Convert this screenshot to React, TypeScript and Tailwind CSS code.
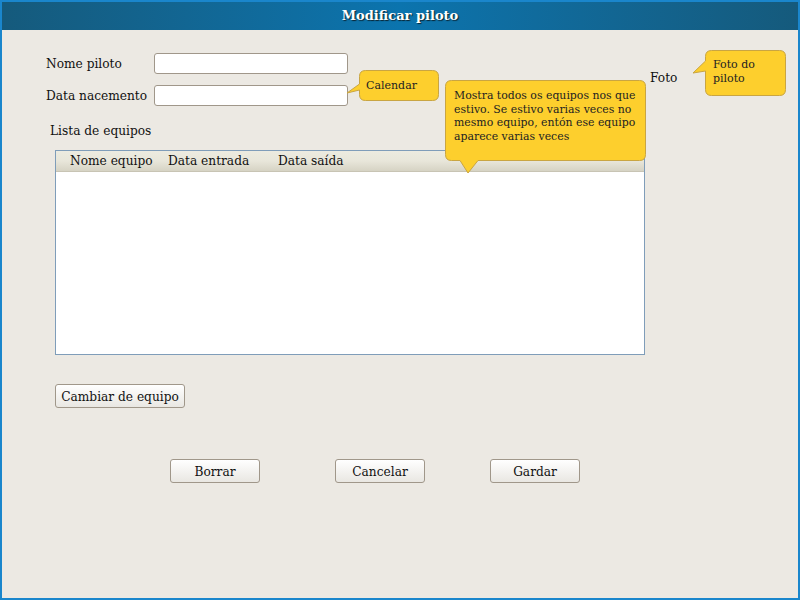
import React from "react";

const FONT = "font-['DejaVu_Serif',serif]";

const Button: React.FC<{ label: string; className?: string }> = ({ label, className }) => (
  <button
    className={`h-[24px] pt-[2px] rounded-[3px] border border-[#a0978a] bg-gradient-to-b from-white to-[#e9e7e2] text-[12.2px] text-[#111] ${className ?? ""}`}
  >
    {label}
  </button>
);

const Field: React.FC<{ label: string }> = ({ label }) => (
  <div className="flex items-center h-[21px]">
    <span className="w-[108px] pt-[2px] text-[12.2px] text-[#111]">{label}</span>
    <div className="w-[194px] h-[21px] rounded-[3px] border border-[#a0978a] bg-white" />
  </div>
);

export default function App() {
  return (
    <div className={`relative w-[800px] h-[600px] flex flex-col border-2 border-[#1a86cc] ${FONT}`}>
      {/* title bar */}
      <div className="h-[28px] flex items-center justify-center bg-gradient-to-r from-[#155a7c] via-[#0b74ae] to-[#155a7c]">
        <span className="text-[13px] font-bold text-white [text-shadow:1px_1px_1px_#0a2533]">Modificar piloto</span>
      </div>

      <div className="flex-1 flex flex-col bg-[#ece9e3]">
        <div className="pt-[23px] pl-[44px] flex flex-col gap-[11px]">
          <Field label="Nome piloto" />
          <Field label="Data nacemento" />
        </div>

        <div className="pl-[48px] mt-[15px] text-[12.2px] text-[#111] h-[20px] leading-[20px]">Lista de equipos</div>

        <div className="ml-[53px] mt-[9px] w-[590px] h-[205px] border border-[#7f9db9] bg-white flex flex-col">
          <div className="h-[21px] flex items-center text-[12.2px] text-[#111] bg-gradient-to-b from-[#ecebe0] via-[#e8e6da] to-[#d6d3c4] border-b border-[#c8c4b4]">
            <span className="pl-[14px] w-[112px]">Nome equipo</span>
            <span className="w-[110px]">Data entrada</span>
            <span>Data saída</span>
          </div>
        </div>

        <div className="pl-[53px] mt-[29px]">
          <Button label="Cambiar de equipo" className="w-[130px] h-[23px]" />
        </div>

        <div className="mt-[51px] flex pl-[168px]">
          <Button label="Borrar" className="w-[90px]" />
          <Button label="Cancelar" className="w-[90px] ml-[75px]" />
          <Button label="Gardar" className="w-[90px] ml-[65px]" />
        </div>
      </div>

      {/* "Foto" label beside the tooltip */}
      <span className="absolute left-[648px] top-[67px] text-[12.2px] text-[#111]">Foto</span>

      {/* callout balloons */}
      <svg className="absolute -left-[2px] -top-[2px] pointer-events-none" width="800" height="600">
        <g fill="#fdcf2d" stroke="#c9a542" strokeWidth="1">
          <path d="M365.5,70.5 H432.5 Q438.5,70.5 438.5,76.5 V94.5 Q438.5,100.5 432.5,100.5 H365.5 Q359.5,100.5 359.5,94.5 V90 L347,93 L359.5,84 V76.5 Q359.5,70.5 365.5,70.5 Z" />
          <path d="M451.5,80.5 H639.5 Q645.5,80.5 645.5,86.5 V154.5 Q645.5,160.5 639.5,160.5 H478 L468,173 L460,160.5 H451.5 Q445.5,160.5 445.5,154.5 V86.5 Q445.5,80.5 451.5,80.5 Z" />
          <path d="M711.5,50.5 H779.5 Q785.5,50.5 785.5,56.5 V89.5 Q785.5,95.5 779.5,95.5 H711.5 Q705.5,95.5 705.5,89.5 V71 L693,73 L705.5,61 V56.5 Q705.5,50.5 711.5,50.5 Z" />
        </g>
      </svg>
      <div className="absolute left-[364px] top-[76px] text-[11px] leading-[16px] text-[#222]">Calendar</div>
      <div className="absolute left-[452px] top-[87px] w-[190px] text-[10.9px] leading-[13.5px] text-[#222]">
        Mostra todos os equipos nos que estivo. Se estivo varias veces no mesmo equipo, entón ese equipo aparece varias veces
      </div>
      <div className="absolute left-[711px] top-[56px] w-[72px] text-[11px] leading-[14px] text-[#222]">
        Foto do piloto
      </div>
    </div>
  );
}
